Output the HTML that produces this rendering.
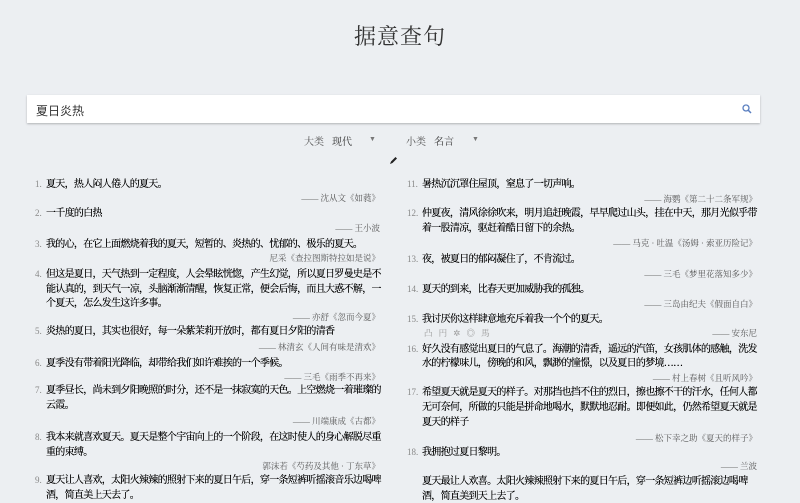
<!DOCTYPE html>
<html><head><meta charset="utf-8"><style>
body{margin:0;width:800px;height:501px;background:#eceff2;position:relative;overflow:hidden;font-family:"Liberation Serif","Noto Serif CJK SC",serif;color:#222}
.t{position:absolute;top:20px;left:0;width:800px;text-align:center;font-size:22px;color:#333;letter-spacing:1px}
.s{position:absolute;left:27px;top:95px;width:733px;height:28px;background:#fff;box-shadow:0 1px 2px rgba(0,0,0,.25)}
.s span{position:absolute;left:9px;top:7px;font-size:12px;font-family:"Liberation Sans","Noto Sans CJK SC",sans-serif;color:#333}
.f{position:absolute;top:133px;font-size:10px;color:#555}
.l{position:absolute;font-size:10px;letter-spacing:-0.7px;white-space:nowrap;line-height:12px;color:#000;text-shadow:0 0 0.3px #000}
.n{position:absolute;font-size:9px;color:#888;line-height:11px}
.a{position:absolute;font-size:8.5px;color:#555;white-space:nowrap;line-height:12px;text-align:right}
.L{left:46px}.R{left:422px}
.aL{right:420px}.aR{right:43px}
</style></head><body>
<div class="t">据意查句</div>
<div class="s"><span>夏日炎热</span>
<svg style="position:absolute;right:8px;top:9px" width="10" height="10" viewBox="0 0 10 10"><circle cx="4" cy="4" r="3" fill="none" stroke="#5a7fc0" stroke-width="1.3"/><path d="M6.2 6.2L9 9" stroke="#5a7fc0" stroke-width="1.5"/></svg></div>
<div class="f" style="left:304px">大类</div><div class="f" style="left:332px;color:#333">现代</div><div class="f" style="left:369px;font-size:7px;top:135px;color:#777">▼</div>
<div class="f" style="left:406px">小类</div><div class="f" style="left:434px;color:#333">名言</div><div class="f" style="left:472px;font-size:7px;top:135px;color:#777">▼</div>
<svg style="position:absolute;left:389px;top:156px" width="9" height="9" viewBox="0 0 9 9"><path d="M1 8L2 5.5L6.5 1L8 2.5L3.5 7Z" fill="#222"/></svg>

<div class="n" style="left:35px;top:179px">1.</div><div class="l L" style="top:179px">夏天，热人闷人倦人的夏天。</div><div class="a aL" style="top:192px">—— 沈从文《如蕤》</div>
<div class="n" style="left:35px;top:208px">2.</div><div class="l L" style="top:208px">一千度的白热</div><div class="a aL" style="top:222px">—— 王小波</div>
<div class="n" style="left:35px;top:239px">3.</div><div class="l L" style="top:239px">我的心，在它上面燃烧着我的夏天，短暂的、炎热的、忧郁的、极乐的夏天。</div><div class="a aL" style="top:252px">尼采《查拉图斯特拉如是说》</div>
<div class="n" style="left:35px;top:269px">4.</div><div class="l L" style="top:269px">但这是夏日，天气热到一定程度，人会晕眩恍惚，产生幻觉，所以夏日罗曼史是不</div><div class="l L" style="top:284px">能认真的，到天气一凉，头脑渐渐清醒，恢复正常，便会后悔，而且大惑不解，一</div><div class="l L" style="top:298px">个夏天，怎么发生这许多事。</div><div class="a aL" style="top:311px">—— 亦舒《忽而今夏》</div>
<div class="n" style="left:35px;top:326px">5.</div><div class="l L" style="top:326px">炎热的夏日，其实也很好，每一朵紫茉莉开放时，都有夏日夕阳的清香</div><div class="a aL" style="top:341px">—— 林清玄《人间有味是清欢》</div>
<div class="n" style="left:35px;top:358px">6.</div><div class="l L" style="top:358px">夏季没有带着阳光降临，却带给我们如许难挨的一个季候。</div><div class="a aL" style="top:371px">—— 三毛《雨季不再来》</div>
<div class="n" style="left:35px;top:385px">7.</div><div class="l L" style="top:385px">夏季昼长，尚未到夕阳晚照的时分，还不是一抹寂寞的天色。上空燃烧一着璀璨的</div><div class="l L" style="top:400px">云霞。</div><div class="a aL" style="top:415px">—— 川端康成《古都》</div>
<div class="n" style="left:35px;top:432px">8.</div><div class="l L" style="top:432px">我本来就喜欢夏天。夏天是整个宇宙向上的一个阶段，在这时使人的身心解脱尽重</div><div class="l L" style="top:447px">重的束缚。</div><div class="a aL" style="top:460px">郭沫若《芍药及其他 · 丁东草》</div>
<div class="n" style="left:35px;top:475px">9.</div><div class="l L" style="top:475px">夏天让人喜欢，太阳火辣辣的照射下来的夏日午后，穿一条短裤听摇滚音乐边喝啤</div><div class="l L" style="top:490px">酒，简直美上天去了。</div>

<div class="n" style="left:407px;top:179px">11.</div><div class="l R" style="top:179px">暑热沉沉罩住屋顶，窒息了一切声响。</div><div class="a aR" style="top:193px">—— 海鹦《第二十二条军规》</div>
<div class="n" style="left:407px;top:208px">12.</div><div class="l R" style="top:208px">仲夏夜，清风徐徐吹来，明月追赶晚霞，早早爬过山头，挂在中天，那月光似乎带</div><div class="l R" style="top:223px">着一股清凉，驱赶着酷日留下的余热。</div><div class="a aR" style="top:237px">—— 马克 · 吐温《汤姆 · 索亚历险记》</div>
<div class="n" style="left:407px;top:254px">13.</div><div class="l R" style="top:254px">夜，被夏日的郁闷凝住了，不肯流过。</div><div class="a aR" style="top:268px">—— 三毛《梦里花落知多少》</div>
<div class="n" style="left:407px;top:284px">14.</div><div class="l R" style="top:284px">夏天的到来，比春天更加威胁我的孤独。</div><div class="a aR" style="top:298px">—— 三岛由纪夫《假面自白》</div>
<div class="n" style="left:407px;top:314px">15.</div><div class="l R" style="top:314px">我讨厌你这样肆意地充斥着我一个个的夏天。</div><div class="a" style="left:424px;top:327px;color:#999;letter-spacing:2px">凸 円 ✲ ◎ 馬</div><div class="a aR" style="top:327px">—— 安东尼</div>
<div class="n" style="left:407px;top:344px">16.</div><div class="l R" style="top:344px">好久没有感觉出夏日的气息了。海潮的清香，遥远的汽笛，女孩肌体的感触，洗发</div><div class="l R" style="top:358px">水的柠檬味儿，傍晚的和风，飘渺的憧憬，以及夏日的梦境……</div><div class="a aR" style="top:372px">—— 村上春树《且听风吟》</div>
<div class="n" style="left:407px;top:387px">17.</div><div class="l R" style="top:387px">希望夏天就是夏天的样子。对那挡也挡不住的烈日，擦也擦不干的汗水，任何人都</div><div class="l R" style="top:402px">无可奈何，所做的只能是拼命地喝水，默默地忍耐。即便如此，仍然希望夏天就是</div><div class="l R" style="top:417px">夏天的样子</div><div class="a aR" style="top:432px">—— 松下幸之助《夏天的样子》</div>
<div class="n" style="left:407px;top:447px">18.</div><div class="l R" style="top:447px">我拥抱过夏日黎明。</div><div class="a aR" style="top:460px">—— 兰波</div>
<div class="l R" style="top:476px">夏天最让人欢喜。太阳火辣辣照射下来的夏日午后，穿一条短裤边听摇滚边喝啤</div><div class="l R" style="top:491px">酒，简直美到天上去了。</div>
</body></html>
